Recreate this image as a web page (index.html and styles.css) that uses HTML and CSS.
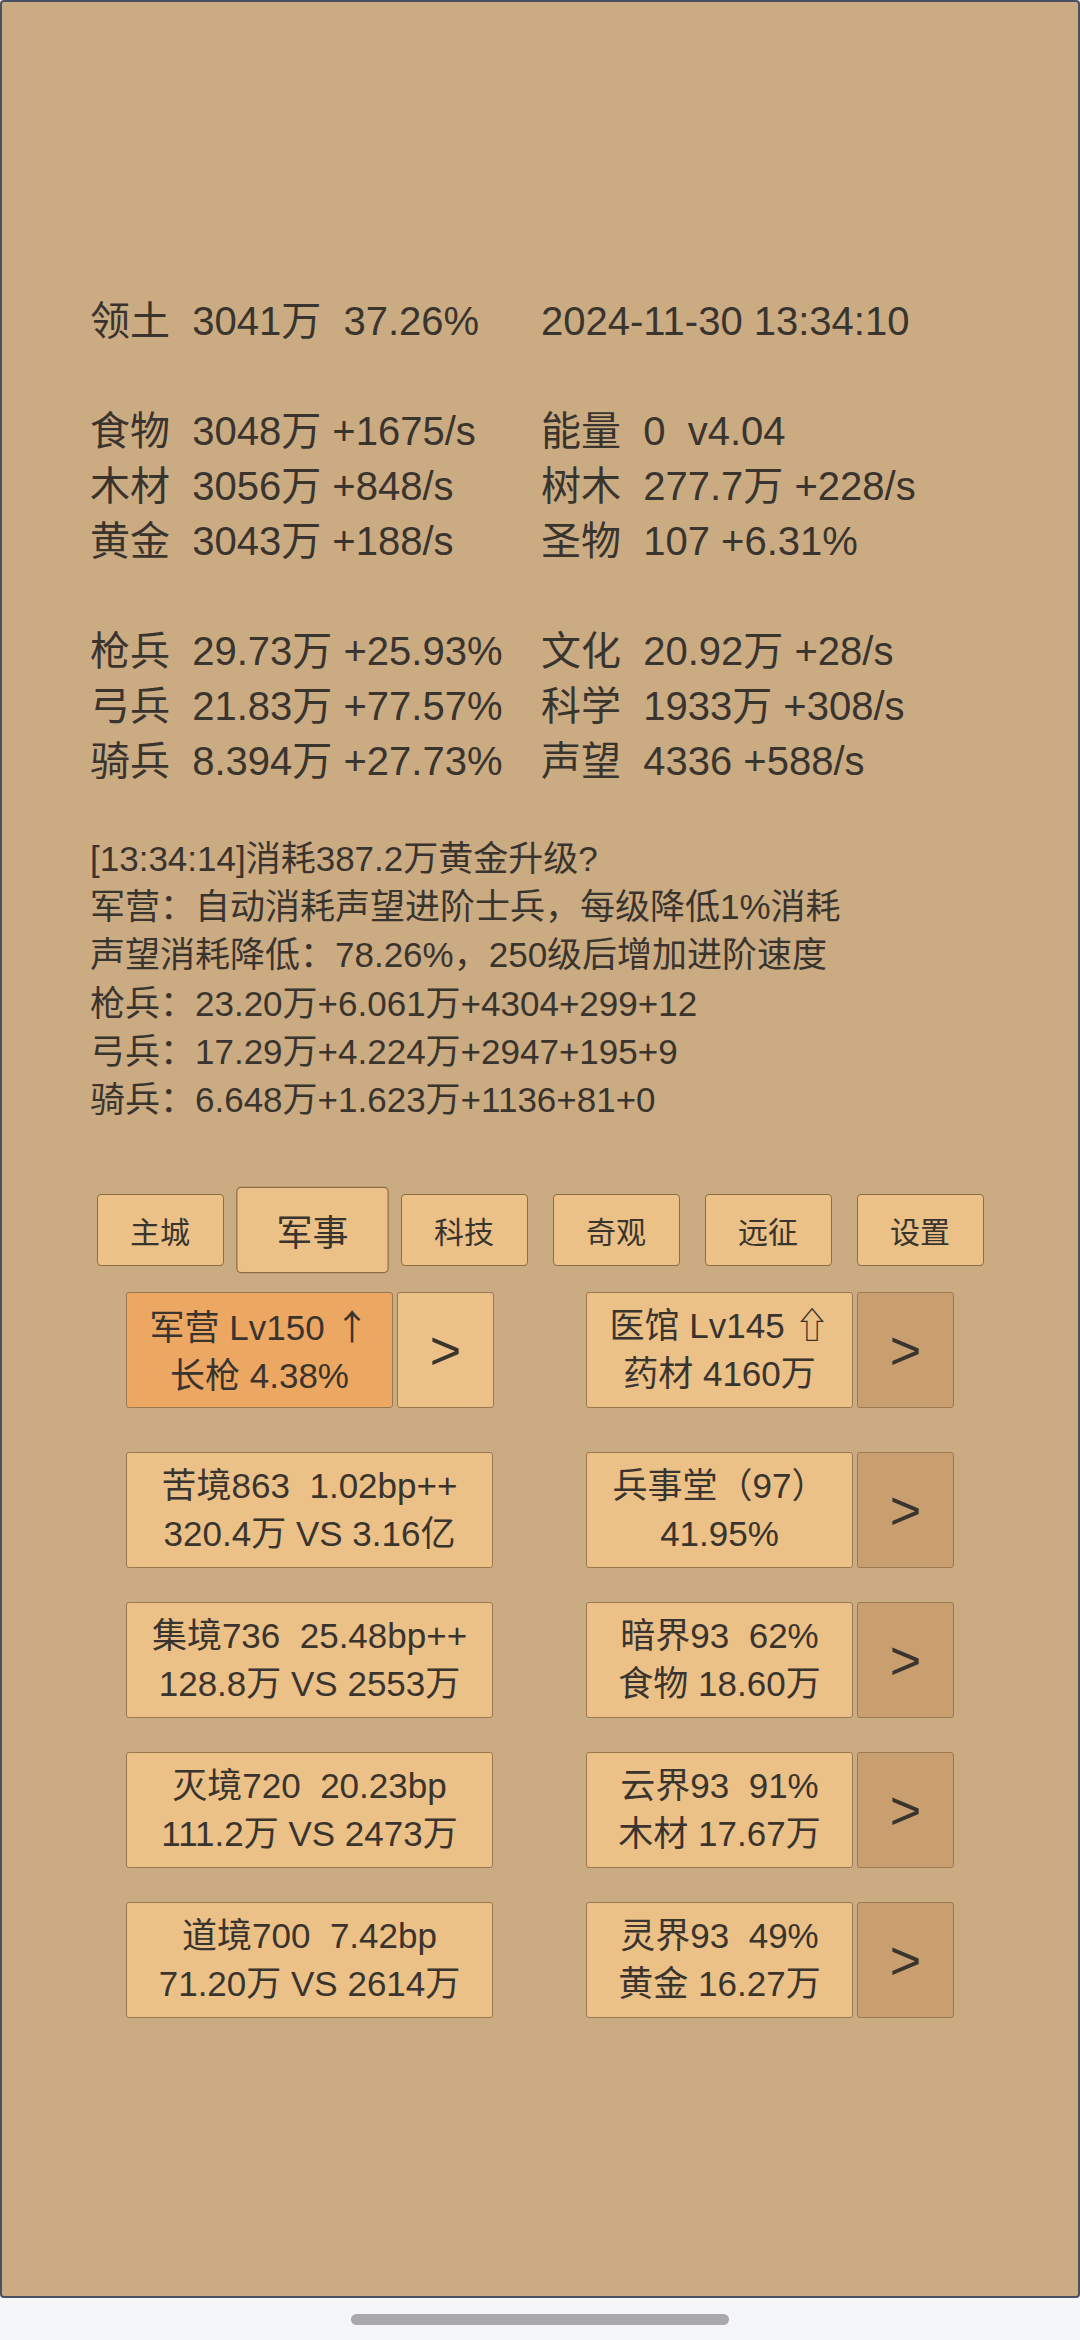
FILE: index.html
```html
<!DOCTYPE html>
<html lang="zh">
<head>
<meta charset="utf-8">
<title>game</title>
<link rel="stylesheet" href="styles.css">
</head>
<body>
<div class="screen">
  <section class="stats">
    <div class="group">
      <div class="t">领土  3041万  37.26%</div>
      <div class="t">2024-11-30 13:34:10</div>
    </div>
    <div class="group">
      <div class="t">食物  3048万 +1675/s</div>
      <div class="t">能量  0  v4.04</div>
      <div class="t">木材  3056万 +848/s</div>
      <div class="t">树木  277.7万 +228/s</div>
      <div class="t">黄金  3043万 +188/s</div>
      <div class="t">圣物  107 +6.31%</div>
    </div>
    <div class="group">
      <div class="t">枪兵  29.73万 +25.93%</div>
      <div class="t">文化  20.92万 +28/s</div>
      <div class="t">弓兵  21.83万 +77.57%</div>
      <div class="t">科学  1933万 +308/s</div>
      <div class="t">骑兵  8.394万 +27.73%</div>
      <div class="t">声望  4336 +588/s</div>
    </div>
  </section>

  <section class="log">
    <div class="t">[13:34:14]消耗387.2万黄金升级?</div>
    <div class="t">军营：自动消耗声望进阶士兵，每级降低1%消耗</div>
    <div class="t">声望消耗降低：78.26%，250级后增加进阶速度</div>
    <div class="t">枪兵：23.20万+6.061万+4304+299+12</div>
    <div class="t">弓兵：17.29万+4.224万+2947+195+9</div>
    <div class="t">骑兵：6.648万+1.623万+1136+81+0</div>
  </section>

  <nav class="tabs">
    <div class="tab">主城</div>
    <div class="tab active">军事</div>
    <div class="tab">科技</div>
    <div class="tab">奇观</div>
    <div class="tab">远征</div>
    <div class="tab">设置</div>
  </nav>

  <section class="buildings">
    <div class="pair first">
      <div class="box main orange"><span class="t">军营 Lv150 <span class="cjk">↑</span></span><span class="t">长枪 4.38%</span></div>
      <div class="box arrow">&gt;</div>
    </div>
    <div class="pair first">
      <div class="box main"><span class="t">医馆 Lv145 ⇧</span><span class="t">药材 4160万</span></div>
      <div class="box arrow dark">&gt;</div>
    </div>

    <div class="pair">
      <div class="box wide"><span class="t">苦境863  1.02bp++</span><span class="t">320.4万 VS 3.16亿</span></div>
    </div>
    <div class="pair">
      <div class="box main"><span class="t">兵事堂（97）</span><span class="t">41.95%</span></div>
      <div class="box arrow dark">&gt;</div>
    </div>

    <div class="pair">
      <div class="box wide"><span class="t">集境736  25.48bp++</span><span class="t">128.8万 VS 2553万</span></div>
    </div>
    <div class="pair">
      <div class="box main"><span class="t">暗界93  62%</span><span class="t">食物 18.60万</span></div>
      <div class="box arrow dark">&gt;</div>
    </div>

    <div class="pair">
      <div class="box wide"><span class="t">灭境720  20.23bp</span><span class="t">111.2万 VS 2473万</span></div>
    </div>
    <div class="pair">
      <div class="box main"><span class="t">云界93  91%</span><span class="t">木材 17.67万</span></div>
      <div class="box arrow dark">&gt;</div>
    </div>

    <div class="pair">
      <div class="box wide"><span class="t">道境700  7.42bp</span><span class="t">71.20万 VS 2614万</span></div>
    </div>
    <div class="pair">
      <div class="box main"><span class="t">灵界93  49%</span><span class="t">黄金 16.27万</span></div>
      <div class="box arrow dark">&gt;</div>
    </div>
  </section>
</div>
<div class="home-bar"></div>
</body>
</html>
```

FILE: styles.css
```css
html, body {
  margin: 0;
  padding: 0;
}
body {
  width: 1080px;
  height: 2340px;
  background: #f5f6f8;
  overflow: hidden;
  font-family: "Liberation Sans", "Noto Sans CJK SC", "DejaVu Sans", sans-serif;
  color: #3a342f;
}
.t {
  white-space: pre;
}
.cjk {
  font-family: "Noto Sans CJK SC", sans-serif;
}
.screen {
  box-sizing: border-box;
  width: 1080px;
  height: 2298px;
  border: 2px solid #4b4f63;
  border-radius: 4px;
  background: #cbab82;
  padding-top: 292px;
  overflow: hidden;
}
.stats {
  padding-left: 88px;
  font-size: 40px;
  line-height: 55px;
}
.group {
  display: grid;
  grid-template-columns: 451px auto;
}
.group + .group {
  margin-top: 55px;
}
.log {
  margin-top: 46px;
  padding-left: 88px;
  font-size: 35px;
  line-height: 48.2px;
}
.tabs {
  margin-top: 70px;
  display: flex;
  justify-content: center;
}
.tab {
  box-sizing: border-box;
  width: 127px;
  height: 72px;
  margin: 0 12.5px;
  border: 1px solid #8d6c48;
  border-radius: 4px;
  background: #ebc187;
  font-size: 30px;
  display: flex;
  align-items: center;
  justify-content: center;
}
.tab.active {
  transform: scale(1.2);
}
.buildings {
  width: 828px;
  margin: 26px auto 0;
  display: grid;
  grid-template-columns: 368px 368px;
  justify-content: space-between;
  row-gap: 34px;
}
.pair {
  display: flex;
  gap: 4px;
}
.pair.first {
  margin-bottom: 10px;
}
.box {
  box-sizing: border-box;
  height: 116px;
  border: 1px solid #9a7852;
  border-radius: 3px;
  background: #ebc187;
  display: flex;
  flex-direction: column;
  justify-content: center;
  align-items: center;
  font-size: 35px;
  line-height: 48px;
}
.main {
  width: 267px;
}
.wide {
  width: 367px;
}
.arrow {
  width: 97px;
  font-size: 54px;
}
.orange {
  background: #eca762;
}
.dark {
  background: #c99f6f;
}
.home-bar {
  width: 378px;
  height: 11px;
  margin: 16px auto 0;
  border-radius: 6px;
  background: #a9a9ab;
}
```
